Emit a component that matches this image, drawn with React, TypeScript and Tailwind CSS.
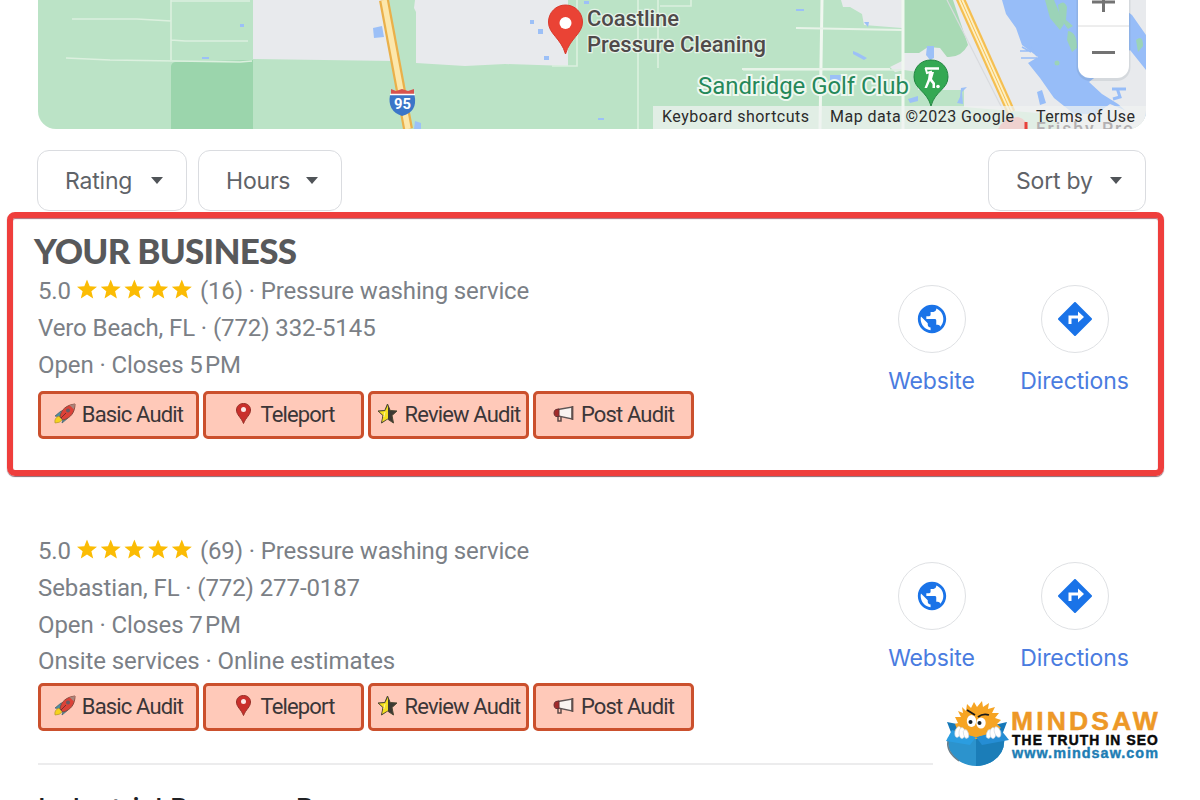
import { MdPublic } from "react-icons/md";

interface Listing {
  id: string;
  rating: string;
  reviews: number;
  category: string;
  address: string;
  closes: string;
  services?: string;
}

const highlighted: Listing = {
  id: "vero-beach",
  rating: "5.0",
  reviews: 16,
  category: "Pressure washing service",
  address: "Vero Beach, FL · (772) 332-5145",
  closes: "5\u200APM",
};

const competitor: Listing = {
  id: "sebastian",
  rating: "5.0",
  reviews: 69,
  category: "Pressure washing service",
  address: "Sebastian, FL · (772) 277-0187",
  closes: "7\u200APM",
  services: "Onsite services · Online estimates",
};

function MapView() {
  return (
    <svg
      className="block h-[129px] w-[1108px] shrink-0 rounded-b-[18px]"
      viewBox="38 0 1108 129"
      fontFamily="Roboto, sans-serif"
    >
      <rect x="38" width="1108" height="129" fill="#bbe3c6" />
      {/* land areas */}
      <path d="M171 66Q172 62 176 62L253 60V129H171z" fill="#9bd5ac" />
      <path d="M253 0H383L393 61L253 59z" fill="#e8eaed" />
      <path d="M415 0H568V66L505 64L465 66L416 63V12L414 8z" fill="#e8eaed" />
      <path d="M841 0H902V28L864 25L862 14L850 7H843z" fill="#e8eaed" />
      <path d="M904 0H1146V129H1060L1050 114L964 107V90H904V70L895 72L890 67L902 61z" fill="#e8eaed" />
      <path d="M904 53V0H953L968 45Q961 58 947 57L940 48L928 47L919 53z" fill="#a9dab5" />
      <path d="M904 70L918 72V105H904zM939 90H962V106H936z" fill="#bbe3c6" />
      {/* minor roads */}
      <g fill="none" stroke="#dcf0df" strokeWidth="1.6">
        <path d="M72 19H137L171 21M66 58L110 60L240 62L252 61M171 0V60M171 1H250M171 40L185 41H248" />
        <path d="M552 66H577V0M638 0V129M658 0V68M660 6H691V0M743 70H904" />
      </g>
      <g fill="none" stroke="#f0f7f0" strokeWidth="3">
        <path d="M822 0L820 129M903 0V129" />
      </g>
      <path d="M796 28L902 30M742 69H890" fill="none" stroke="#e7f3e8" strokeWidth="2" />
      <path d="M947 0L1007 118" stroke="#d9dbde" strokeWidth="1.2" />
      {/* water */}
      <path
        d="M1002 0H1112L1132 15L1146 35V119L1110 104L1096 114H1074L1054 98L1040 78L1028 63L1038 57L1022 45L1016 28L1006 14z"
        fill="#97bdf8"
      />
      <path d="M1106 0H1146V24L1128 10zM1130 50L1146 70V129L1118 104L1102 94L1089 82z" fill="#e8eaed" />
      <path d="M1037 92L1042 90L1046 103L1040 105z" fill="#97bdf8" />
      <path d="M1022 47L1031 52M1020 51H1032M1021 58H1037M1030 46L1037 56" stroke="#97bdf8" strokeWidth="1.5" />
      <path d="M1112 89H1126M1117 88L1120 97L1113 99" fill="none" stroke="#97bdf8" strokeWidth="3" />
      <g fill="#9bd3b8">
        <path d="M1045 0H1054L1064 24L1060 30L1050 18z" />
        <path d="M1058 5Q1064 -1 1067 7L1066 20L1073 26L1068 29L1060 18z" />
        <path d="M1068 31Q1077 32 1077 48L1072 52L1067 40z" />
        <path d="M1136 40Q1143 34 1143 46L1138 52z" />
        <circle cx="1057" cy="63" r="2.5" />
      </g>
      <g fill="#9cc0f7">
        <path d="M373 28L382 26L384 37L374 38z" />
        <path d="M415 121L421 123V129H414z" />
        <rect x="530" y="20" width="4" height="4" />
        <rect x="538" y="29" width="5" height="5" />
        <rect x="544" y="56" width="5" height="4" />
        <rect x="584" y="1" width="5" height="3" />
        <rect x="240" y="24" width="4" height="3" />
        <rect x="202" y="57" width="7" height="2" />
        <rect x="598" y="118" width="6" height="2" />
        <rect x="796" y="9" width="8" height="2" />
        <path d="M864 22L869 22L868 27zM853 51L858 53L867 58L864 60L853 54z" />
        <path d="M927 46H934V58L930 60L926 55z" />
        <path d="M961 88L967 87L962 92L963 104L957 103L960 97z" />
        <path d="M830 75H842V81H830zM908 99L918 96V101L910 103z" />
      </g>
      {/* highways */}
      <path d="M384 0L408 129" stroke="#eab04a" strokeWidth="10" />
      <path d="M384 0L408 129" stroke="#fce7ab" strokeWidth="5.5" />
      <path d="M960 -2L1011 112" stroke="#f5bf51" strokeWidth="9" />
      <path d="M960 -2L1011 112" stroke="#fdf0c4" strokeWidth="4.5" />
      <path d="M960 -2L1011 112" stroke="#f5bf51" strokeWidth="1" />
      <path d="M998 129Q1004 117 1018 117Q1027 119 1028 129z" fill="#ec7f78" />
      {/* interstate shield */}
      <path d="M390 95H414.5Q418 112 402 116Q387 111 390 95z" fill="#3b76c8" />
      <path d="M391 89L396 91L402 89L408 91L414 89V94H391z" fill="#d8534e" />
      <path d="M390 94.5H415" stroke="#fff" strokeWidth="1.5" />
      <text x="394" y="109" fontSize="14.5" fontWeight="700" fill="#fff" textLength="17" lengthAdjust="spacingAndGlyphs">
        95
      </text>
      {/* red marker */}
      <path
        d="M565.5 5C556 5 548.5 12.5 548.5 22C548.5 34 561 38 565.5 54C570 38 582.5 34 582.5 22C582.5 12.5 575 5 565.5 5z"
        fill="#ea4335"
        stroke="#d9392c"
      />
      <circle cx="565.5" cy="23" r="6" fill="#fff" />
      <g fontSize="22" fontWeight="500" fill="#4f4a4a" stroke="#e6f3e9" strokeWidth="2.5" paintOrder="stroke">
        <text x="587" y="26" textLength="92">Coastline</text>
        <text x="587" y="52" textLength="179">Pressure Cleaning</text>
      </g>
      <text x="698" y="93.5" fontSize="24" fill="#25885a" stroke="#eff8f0" strokeWidth="4" paintOrder="stroke" textLength="211">
        Sandridge Golf Club
      </text>
      {/* golf marker */}
      <path
        d="M931 60C921 60 914 67 914 77C914 89 927 91 931 106C935 91 948 89 948 77C948 67 941 60 931 60z"
        fill="#34a853"
        stroke="#238642"
      />
      <path d="M925 68.5H939" stroke="#fff" strokeWidth="2.5" />
      <path d="M925.5 68L927 73L932 71.5" fill="none" stroke="#fff" strokeWidth="2" />
      <path d="M929 72H934L932 79L935 83V88H932.5V84L930 81L927 88H924.5L928 79z" fill="#fff" />
      <circle cx="938" cy="86.5" r="1.8" fill="#fff" />
      {/* attribution */}
      <rect x="653" y="106" width="493" height="23" fill="#f0f2f1" fillOpacity=".72" />
      <path d="M1026 122V129" stroke="#e8403a" strokeWidth="3" />
      <text x="1036" y="135" fontSize="17.5" fontWeight="500" fill="#b3b0b2" textLength="97">Frisby Pro</text>
      <g fontSize="16" fill="#2b2b2b">
        <text x="662" y="122" textLength="147">Keyboard shortcuts</text>
        <text x="830" y="122" textLength="184">Map data ©2023 Google</text>
        <text x="1036" y="122" textLength="99">Terms of Use</text>
      </g>
      {/* zoom control */}
      <rect x="1076.5" y="-20" width="54" height="101" rx="14" fill="#51606b" opacity=".12" />
      <rect x="1078" y="-20" width="51" height="98" rx="12" fill="#fff" />
      <path d="M1078 26H1129" stroke="#dcdcdc" />
      <path d="M1092 2H1115M1103.5 -10V12M1092 52.5H1115" stroke="#737373" strokeWidth="3" />
    </svg>
  );
}

function FilterButton({ label, className }: { label: string; className: string }) {
  return (
    <button
      className={`flex h-[61px] items-center justify-between rounded-xl border-[1.5px] border-[#dadce0] pr-[23px] pl-[27px] font-[Inter,sans-serif] text-[23px] tracking-[-0.2px] text-[#5f6368] ${className}`}
    >
      <span className="pt-0.5 whitespace-nowrap">{label}</span>
      <svg className="h-[7px] w-3" viewBox="0 0 12 7">
        <path d="M0 0H12L6 7z" fill="#505458" />
      </svg>
    </button>
  );
}

function Stars() {
  return (
    <svg className="mr-2 ml-[6px] h-5 w-[115px] -translate-y-[2.5px]" viewBox="0 0 115 20">
      {[0, 23.7, 47.4, 71.1, 94.8].map((x) => (
        <path
          key={x}
          transform={`translate(${x})`}
          d="M10 0L12.7 6.7L20 7.2L14.4 11.8L16.2 19L10 15.1L3.8 19L5.6 11.8L0 7.2L7.3 6.7z"
          fill="#fbbc04"
        />
      ))}
    </svg>
  );
}

function RocketIcon() {
  return (
    <svg className="h-[21px] w-[22px]" viewBox="0 0 22 21">
      <path d="M1 13L7 8L11 8L7 14zM8 20L14 15L15 10L10 12z" fill="#4c8fa3" stroke="#4a6670" strokeWidth=".8" />
      <path d="M5 13Q0 15 1 20Q6 20 8 17z" fill="#f5d31d" stroke="#b3952c" strokeWidth=".7" />
      <path d="M6 14C7 6 13 2 21 1C21 9 17 15 9 17z" fill="#dc4238" stroke="#8a4a3e" />
      <path d="M15.5 2L21 1L20 6.5z" fill="#a8867c" />
      <circle cx="14" cy="7.5" r="2" fill="#6b5a62" />
      <path d="M7 15L12 10" stroke="#782c2c" />
    </svg>
  );
}

function PinIcon() {
  return (
    <svg className="h-[21px] w-[15px]" viewBox="0 0 15 21">
      <path
        d="M7.5 .5C3 .5 .5 3.5 .5 7C.5 12 5 14 7.5 20.5C10 14 14.5 12 14.5 7C14.5 3.5 12 .5 7.5 .5z"
        fill="#c9302c"
        stroke="#963029"
      />
      <circle cx="7.5" cy="6.5" r="2.5" fill="#fbe9e7" />
    </svg>
  );
}

function HalfStarIcon() {
  return (
    <svg className="h-[21px] w-[21px]" viewBox="0 0 21 21">
      <path
        d="M10.5 1L13.2 7.5L20 8L15 12.5L16.5 20L10.5 16L4.5 20L6 12.5L1 8L7.8 7.5z"
        fill="#3b3933"
        stroke="#4c4732"
      />
      <path d="M11 2V15.5L5 19L6.5 12.5L2 8.5L8 8z" fill="#f4df20" />
      <path d="M8 9L6.8 14" stroke="#fff59b" />
    </svg>
  );
}

function MegaphoneIcon() {
  return (
    <svg className="h-[18px] w-[21px]" viewBox="0 0 21 18">
      <path d="M5 11V16H8L8 12" fill="none" stroke="#5d4b49" strokeWidth="1.5" />
      <path d="M5 4.5L19 2V14L5 11z" fill="#f9f4f1" stroke="#5e5555" strokeWidth="1.4" />
      <path d="M6 4V11.5H3Q1 11 1 8Q1 5 3 4.5z" fill="#a32a2a" stroke="#683033" />
      <path d="M19.5 1V15" stroke="#604f4d" strokeWidth="1.8" />
    </svg>
  );
}

const audits = [
  { label: "Basic Audit", Icon: RocketIcon },
  { label: "Teleport", Icon: PinIcon },
  { label: "Review Audit", Icon: HalfStarIcon },
  { label: "Post Audit", Icon: MegaphoneIcon },
];

function AuditButtons() {
  return (
    <div className="flex gap-1">
      {audits.map(({ label, Icon }) => (
        <button
          key={label}
          className="flex h-12 w-[161px] items-center justify-center gap-[6px] rounded-[5px] border-3 border-[#cb502d] bg-[#ffc9b9] text-[22px] tracking-[-0.85px] whitespace-nowrap text-[#3b3638]"
        >
          <span className="-mt-0.5 flex w-[22px] justify-center">
            <Icon />
          </span>
          <span>{label}</span>
        </button>
      ))}
    </div>
  );
}

function ListingDetails({ listing }: { listing: Listing }) {
  return (
    <div className="pt-px text-2xl leading-[37.5px] tracking-[-0.1px] whitespace-nowrap text-[#7b8086]">
      <div className="flex items-center tracking-[-0.14px]">
        <span>{listing.rating}</span>
        <Stars />
        <span>
          ({listing.reviews}) · {listing.category}
        </span>
      </div>
      <div className="-mt-px">{listing.address}</div>
      <div>Open · Closes {listing.closes}</div>
      {listing.services && <div className="-mt-[1.5px]">{listing.services}</div>}
    </div>
  );
}

function DirectionsIcon() {
  return (
    <svg className="size-[34px]" viewBox="0 0 34 34">
      <path d="M17 1L33 17L17 33L1 17z" fill="#1a73e8" stroke="#1a73e8" strokeWidth="2" strokeLinejoin="round" />
      <path d="M12 22V15H22" fill="none" stroke="#fff" strokeWidth="3" />
      <path d="M20 9.5L26 15L20 20.5z" fill="#fff" />
    </svg>
  );
}

function ListingActions() {
  const circle =
    "flex size-[68px] items-center justify-center rounded-full border-[1.5px] border-[#dfe1e4] text-[#1a73e8]";
  const label = "font-[Inter,sans-serif] text-[23px] leading-7 tracking-[-0.1px] text-[#4a7ce0]";

  return (
    <div className="flex">
      <a className="flex w-[143px] flex-col items-center gap-[14px]">
        <span className={circle}>
          <MdPublic size={34} />
        </span>
        <span className={label}>Website</span>
      </a>
      <a className="flex w-[143px] flex-col items-center gap-[14px]">
        <span className={circle}>
          <DirectionsIcon />
        </span>
        <span className={label}>Directions</span>
      </a>
    </div>
  );
}

function MindsawLogo() {
  return (
    <svg
      className="absolute top-[695px] left-[940px] h-[76px] w-[225px]"
      viewBox="0 0 225 76"
      fontFamily="Liberation Sans, Arial, sans-serif"
      fontWeight="700"
    >
      {/* box behind the saw blade */}
      <path d="M7 27L22 30H54L67 27L62 40H12z" fill="#1678b8" />
      <path d="M8 42H64Q66 57 53 66Q36 76 19 66Q6 57 8 42z" fill="#2c93cd" />
      <path d="M36 42H64Q66 57 53 66Q45 71 36 71z" fill="#1b7db8" />
      <path d="M8 46Q6 57 19 66" fill="none" stroke="#6c7f8b" strokeWidth="1.5" />
      <path
        d="M16 40L14 36L17 34L15 29L18 28L15 22L21 22L18 16L23 18L22 12L26 16L27 9L31 13L34 7L37 12L42 6L43 12L49 8L48 14L55 12L52 18L59 18L55 23L61 25L57 29L61 33L57 35L57 41L36 44z"
        fill="#f6a423"
      />
      <path d="M12 35L36 42L30 50L6 46z" fill="#2b9de0" />
      <path d="M61 35L36 42L42 50L69 45z" fill="#258dd4" />
      <path d="M17 31H56V37L36 42L17 37z" fill="#f6a423" />
      <ellipse cx="31.5" cy="26" rx="4.7" ry="6" fill="#fff" />
      <ellipse cx="41" cy="28" rx="4.7" ry="5.5" fill="#fff" />
      <circle cx="30.5" cy="27" r="2" fill="#172027" />
      <circle cx="39.5" cy="28" r="2" fill="#172027" />
      <path d="M27 15L35 20M38 22Q43 18 49 20" fill="none" stroke="#17191b" strokeWidth="1.8" />
      <g fill="#fff" stroke="#c7d2dc" strokeWidth=".6">
        <ellipse cx="18" cy="37" rx="3" ry="5.5" transform="rotate(15 18 37)" />
        <ellipse cx="22" cy="38" rx="3" ry="5.5" />
        <ellipse cx="26" cy="39" rx="2.5" ry="4.5" transform="rotate(-15 26 39)" />
        <ellipse cx="49" cy="39" rx="2.5" ry="4.5" transform="rotate(15 49 39)" />
        <ellipse cx="53" cy="38" rx="3" ry="5.5" />
        <ellipse cx="57.5" cy="37" rx="3" ry="5.5" transform="rotate(-20 57.5 37)" />
      </g>
      <text x="71" y="35" fontSize="25.5" letterSpacing="3" fill="#ed9827" stroke="#ed9827" strokeWidth=".5" textLength="150" lengthAdjust="spacingAndGlyphs">
        MINDSAW
      </text>
      <text x="72" y="50" fontSize="14.5" letterSpacing="1.2" fill="#090909" stroke="#090909" strokeWidth=".5" textLength="147" lengthAdjust="spacingAndGlyphs">
        THE TRUTH IN SEO
      </text>
      <text x="72" y="62.5" fontSize="14" letterSpacing="1" fill="#207db4" stroke="#207db4" strokeWidth=".4" textLength="147" lengthAdjust="spacingAndGlyphs">
        www.mindsaw.com
      </text>
    </svg>
  );
}

export default function App() {
  return (
    <main className="relative flex h-[800px] w-[1200px] flex-col overflow-hidden bg-white font-[Roboto,sans-serif]">
      <div className="ml-[38px]">
        <MapView />
      </div>

      <div className="mt-[21px] mr-[54px] ml-[37px] flex">
        <FilterButton label="Rating" className="w-[150px]" />
        <FilterButton label="Hours" className="ml-[11px] w-[144px]" />
        <FilterButton label="Sort by" className="ml-auto w-[158px]" />
      </div>

      <section className="mt-px ml-[7px] flex h-[264px] w-[1157px] shrink-0 justify-between rounded-lg border-[6px] border-[#ef3e3c] pr-[12px] pl-[25px] shadow-[0_1px_1px_#8b6670,inset_0_1px_1px_#b06b76]">
        <div>
          <h2 className="mt-[12px] mb-0.5 -ml-1 font-[Lato,sans-serif] text-[35px] leading-10 font-black tracking-[-0.75px] whitespace-nowrap text-[#58595b]">
            YOUR BUSINESS
          </h2>
          <ListingDetails listing={highlighted} />
          <div className="mt-[6px]">
            <AuditButtons />
          </div>
        </div>
        <div className="mt-[67px]">
          <ListingActions />
        </div>
      </section>

      <section className="mt-[56px] mr-[54px] ml-[38px] flex justify-between">
        <div>
          <ListingDetails listing={competitor} />
          <div className="mt-[2px]">
            <AuditButtons />
          </div>
        </div>
        <div className="mt-[30px]">
          <ListingActions />
        </div>
      </section>

      <hr className="mt-8 ml-[38px] w-[895px] border-t-2 border-[#ececed]" />
      <h3 className="mt-[26px] ml-[38px] font-[Inter,sans-serif] text-[28px] leading-9 font-medium whitespace-nowrap text-[#202124]">
        Industrial Pressure Pros
      </h3>

      <MindsawLogo />
    </main>
  );
}
